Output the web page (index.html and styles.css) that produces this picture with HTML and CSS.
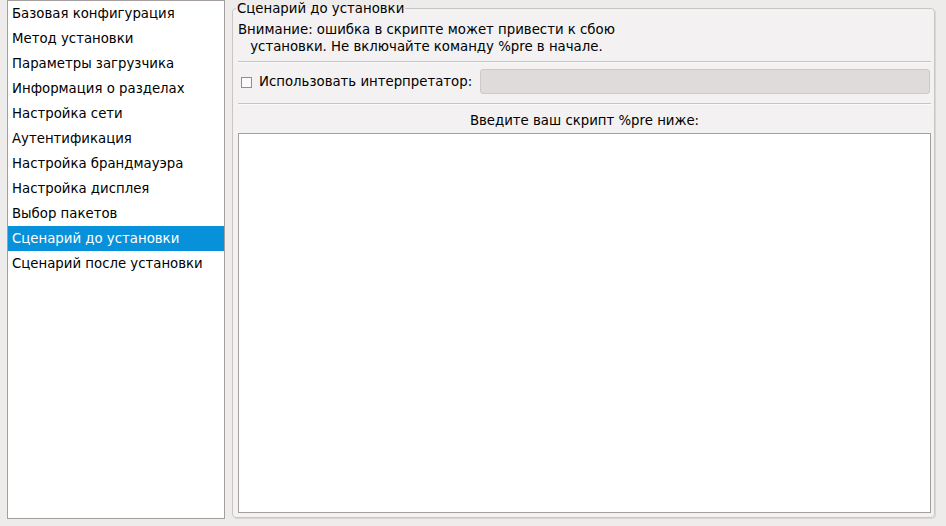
FILE: index.html
```html
<!DOCTYPE html>
<html lang="ru">
<head>
    <meta charset="UTF-8">
    <meta name="viewport" content="width=device-width, initial-scale=1.0">
    <title>Kickstart</title>
    <link rel="stylesheet" href="styles.css">
</head>
<body>
    <div class="window">
        <ul class="sections">
            <li class="section">Базовая конфигурация</li>
            <li class="section">Метод установки</li>
            <li class="section">Параметры загрузчика</li>
            <li class="section">Информация о разделах</li>
            <li class="section">Настройка сети</li>
            <li class="section">Аутентификация</li>
            <li class="section">Настройка брандмауэра</li>
            <li class="section">Настройка дисплея</li>
            <li class="section">Выбор пакетов</li>
            <li class="section selected">Сценарий до установки</li>
            <li class="section">Сценарий после установки</li>
        </ul>

        <fieldset class="frame">
            <legend class="frame-title">Сценарий до установки</legend>

            <div class="warning">
                <span class="warning-text">Внимание: ошибка в скрипте может привести к сбою<br>установки. Не включайте команду %pre в начале.</span>
            </div>

            <div class="separator"></div>

            <div class="interp-row">
                <span class="check"></span>
                <span class="interp-label">Использовать интерпретатор:</span>
                <div class="entry"></div>
            </div>

            <div class="separator lower"></div>

            <div class="script-title">Введите ваш скрипт %pre ниже:</div>
            <div class="script-area"></div>
        </fieldset>
    </div>
</body>
</html>
```

FILE: styles.css
```css
html,
body {
    margin: 0;
    padding: 0;
    background: #edeceb;
    font-family: "DejaVu Sans", "Noto Sans", sans-serif;
    font-size: 13.3px;
    line-height: 17px;
    color: #000;
}

.window {
    display: flex;
    align-items: flex-start;
    gap: 7px;
    padding-left: 7px;
}

/* left list of sections */

.sections {
    list-style: none;
    margin: 0;
    padding: 0;
    width: 218px;
    height: 519px;
    box-sizing: border-box;
    background: #fff;
    border: 1px solid #a59e9e;
}

.section {
    height: 25px;
    line-height: 25px;
    padding-left: 4px;
    white-space: nowrap;
}

.selected {
    background: #0791db;
    color: #fff;
}

/* right frame */

.frame {
    margin: 0;
    width: 703px;
    height: 518px;
    box-sizing: border-box;
    padding: 4px 3px 4px 5px;
    background: #f3f1f1;
    border: 1px solid #c9c5c4;
    border-radius: 4px;
    box-shadow: 1px 1px 0 #dad7d6;
}

.frame-title {
    padding: 0 1px;
    margin-left: -2px;
    line-height: 17px;
}

.warning-text {
    display: inline-block;
    text-align: center;
}

.separator {
    height: 1px;
    margin-top: 6px;
    background: #c8c4c3;
    box-shadow: 0 1px 0 #fbfafa;
}

.separator.lower {
    margin-top: 9px;
}

.interp-row {
    display: flex;
    align-items: center;
    height: 25px;
    margin-top: 7px;
}

.check {
    width: 9px;
    height: 9px;
    margin: 1px 7px 0 3px;
    border: 1px solid #938d8d;
    background: #fbfafa;
}

.interp-label {
    margin-right: 8px;
    white-space: nowrap;
}

.entry {
    flex: 1;
    height: 25px;
    box-sizing: border-box;
    margin-right: 1px;
    background: #dedbda;
    border: 1px solid #cdc9c8;
    border-radius: 3px;
}

.script-title {
    margin-top: 8px;
    text-align: center;
}

.script-area {
    height: 380px;
    box-sizing: border-box;
    margin-top: 4px;
    background: #fff;
    border: 1px solid #a59e9e;
}
```
